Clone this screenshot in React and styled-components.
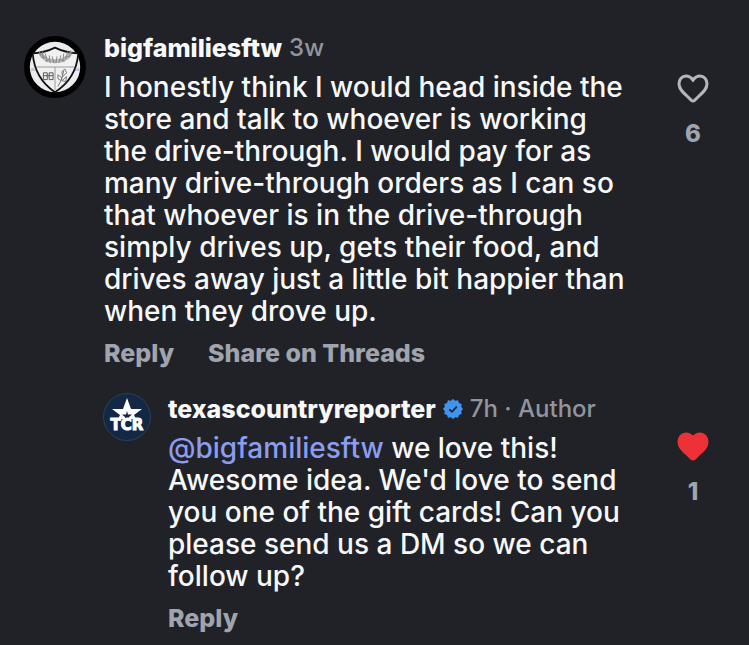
import React, { useState } from 'react';
import styled, { createGlobalStyle } from 'styled-components';

const comments = [
  {
    id: 1,
    user: 'bigfamiliesftw',
    time: '3w',
    text: 'I honestly think I would head inside the store and talk to whoever is working the drive-through. I would pay for as many drive-through orders as I can so that whoever is in the drive-through simply drives up, gets their food, and drives away just a little bit happier than when they drove up.',
    likes: 6,
    liked: false,
    actions: ['Reply', 'Share on Threads'],
  },
  {
    id: 2,
    user: 'texascountryreporter',
    time: '7h',
    isReply: true,
    isAuthor: true,
    mention: '@bigfamiliesftw',
    text: "we love this! Awesome idea. We'd love to send you one of the gift cards! Can you please send us a DM so we can follow up?",
    likes: 1,
    liked: true,
    actions: ['Reply'],
  },
];

const CrestLogo = () => (
  <svg viewBox="0 0 64 64" aria-hidden="true">
    <circle cx="32" cy="32" r="32" fill="#000" />
    <circle cx="32" cy="32" r="26" fill="#ececee" />
    <path d="M9 18Q22 17 32 12Q42 17 56 18Q54 44 32 58Q11 44 9 18Z" fill="#f1f1f2" stroke="#111" strokeWidth="1.8" />
    <path d="M13 32H52M32 32V56" stroke="#999" strokeWidth="1" />
    <g fill="none" stroke="#888" strokeWidth="1">
      <path d="M17 18Q22 26 32 26Q43 26 48 18" strokeWidth="4" stroke="#b5b5b8" />
      <path d="M16 16l1 5M19 16l1 8M22 18l2 9M26 20l1 8M29 21l2 7M34 21l-1 7M38 20l-2 8M41 18l-1 9M45 16l-2 8M48 15l-1 7" />
      <path d="M15 18l5 1M18 22l5 0M22 26l5-2M37 24l5 2M42 22l5-1M45 18l5-1" />
    </g>
    <g fill="none" stroke="#555" strokeWidth="1">
      <path d="M20 38h4v7H20zM26 38h4v7H26zM20 41h10" />
      <path d="M35 52Q39 47 41 36M38 46l-3-2l0-4l4 3zM40 42l-1-5l3-3l2 4zM39 46l5-4l-1 5z" stroke="#777" />
    </g>
    <g fill="#777" fontFamily="Inter, sans-serif" fontSize="4">
      <text x="7" y="36">20</text>
      <text x="52" y="36">24</text>
    </g>
  </svg>
);

const TcrLogo = () => (
  <svg viewBox="0 0 48 48" aria-hidden="true">
    <circle cx="24" cy="24" r="23.500" fill="#122844" stroke="#2c4056" />
    <path d="M24 5L28 16H39L31 22L33 26H15L17 22L9 16H20Z" fill="#fff" />
    <path d="M24 18L25 21.500H29L26 24V26H22V24L19 21.500H23Z" fill="#122844" />
    <text
      x="24"
      y="37"
      textAnchor="middle"
      fill="#fff"
      stroke="#fff"
      strokeWidth="1"
      fontFamily="'DejaVu Sans', sans-serif"
      fontWeight="700"
      fontSize="15"
    >
      TCR
    </text>
  </svg>
);

const VerifiedIcon = () => (
  <svg width="20" height="20" viewBox="0 0 20 20" role="img" aria-label="Verified">
    <path
      d="M10 0L12.2 1.8L15 1.3L16 4L18.7 5L18.2 7.8L20 10L18.2 12.2L18.7 15L16 16L15 18.7L12.2 18.2L10 20L7.8 18.2L5 18.7L4 16L1.3 15L1.8 12.2L0 10L1.8 7.8L1.3 5L4 4L5 1.3L7.8 1.8Z"
      fill="#4093ef"
    />
    <path d="M6.3 10.3L9 12.8L13.8 7.6" fill="none" stroke="#1c2733" strokeWidth="1.8" />
  </svg>
);

const HeartIcon = () => (
  <svg width="32" height="30" viewBox="0 0 32 30" aria-hidden="true">
    <path d="M16 6C13.8 3 11.6 2 9 2C5 2 2 5.4 2 9.8C2 15 6 18.4 10 22L14.4 26.3Q16 27.7 17.6 26.3L22 22C26 18.4 30 15 30 9.8C30 5.4 27 2 23 2C20.4 2 18.2 3 16 6Z" />
  </svg>
);

const Comment = ({ data }) => {
  const [liked, setLiked] = useState(data.liked);
  const likes = data.likes + (liked ? 1 : 0) - (data.liked ? 1 : 0);

  return (
    <Item $reply={data.isReply}>
      <Avatar $reply={data.isReply}>{data.isReply ? <TcrLogo /> : <CrestLogo />}</Avatar>
      <Content>
        <Header>
          <UserName href="#">{data.user}</UserName>
          {data.isAuthor && <VerifiedIcon />}
          <Meta>
            {data.time}
            {data.isAuthor && ' · Author'}
          </Meta>
        </Header>
        <Text>
          {data.mention && <Mention href="#">{data.mention}</Mention>}
          {data.mention && ' '}
          {data.text}
        </Text>
        <Actions>
          {data.actions.map((action) => (
            <ActionBtn type="button" key={action}>
              {action}
            </ActionBtn>
          ))}
        </Actions>
      </Content>
      <LikeBtn
        type="button"
        aria-pressed={liked}
        $liked={liked}
        $reply={data.isReply}
        onClick={() => setLiked(!liked)}
      >
        <HeartIcon />
        <span>{likes}</span>
      </LikeBtn>
    </Item>
  );
};

const App = () => (
  <>
    <GlobalStyle />
    <CommentList>
      {comments.map((data) => (
        <Comment key={data.id} data={data} />
      ))}
    </CommentList>
  </>
);

const GlobalStyle = createGlobalStyle`
  * {
    box-sizing: border-box;
  }
  body {
    margin: 0;
    background-color: #212227;
    color: #f7f8fa;
    font-family: Inter, "Liberation Sans", sans-serif;
  }
`;
const CommentList = styled.main`
  display: flex;
  flex-direction: column;
  gap: 24px;
  padding: 32px 32px 8px 24px;
`;
const Item = styled.article`
  display: flex;
  align-items: flex-start;
  padding-left: ${({ $reply }) => ($reply ? '79px' : '0')};
`;
const Avatar = styled.div`
  flex: none;
  width: ${({ $reply }) => ($reply ? '48px' : '62px')};
  margin-top: ${({ $reply }) => ($reply ? '0' : '4px')};
  margin-right: ${({ $reply }) => ($reply ? '17px' : '18px')};
  svg {
    display: block;
    width: 100%;
  }
`;
const Content = styled.div`
  flex: 1;
  min-width: 0;
`;
const Header = styled.header`
  display: flex;
  align-items: center;
  gap: 7px;
  height: 32px;
  font-size: 24px;
  line-height: 32px;
`;
const UserName = styled.a`
  color: inherit;
  font-size: 25px;
  font-weight: 800;
  text-decoration: none;
`;
const Meta = styled.span`
  color: #91959f;
  font-weight: 500;
`;
const Text = styled.p`
  margin: 7px 0 10px;
  font-size: 28px;
  font-weight: 500;
  line-height: 32px;
`;
const Mention = styled.a`
  display: inline-block;
  color: #8c9df0;
  text-decoration: none;
`;
const Actions = styled.div`
  display: flex;
  gap: 34px;
`;
const ActionBtn = styled.button`
  padding: 0;
  border: none;
  background: none;
  color: #a0a4ae;
  font-family: inherit;
  font-size: 25px;
  font-weight: 800;
  line-height: 32px;
  cursor: pointer;
`;
const LikeBtn = styled.button`
  flex: none;
  display: flex;
  flex-direction: column;
  align-items: center;
  gap: 14px;
  width: 48px;
  margin-top: ${({ $reply }) => ($reply ? '39px' : '42px')};
  margin-left: 36px;
  padding: 0;
  border: none;
  background: none;
  color: #a0a4ae;
  font-family: inherit;
  font-size: 24px;
  font-weight: 800;
  line-height: 32px;
  cursor: pointer;
  path {
    fill: ${({ $liked }) => ($liked ? '#ed3237' : 'none')};
    stroke: ${({ $liked }) => ($liked ? '#ed3237' : '#b4b6be')};
    stroke-width: 3;
  }
`;

export default App;
